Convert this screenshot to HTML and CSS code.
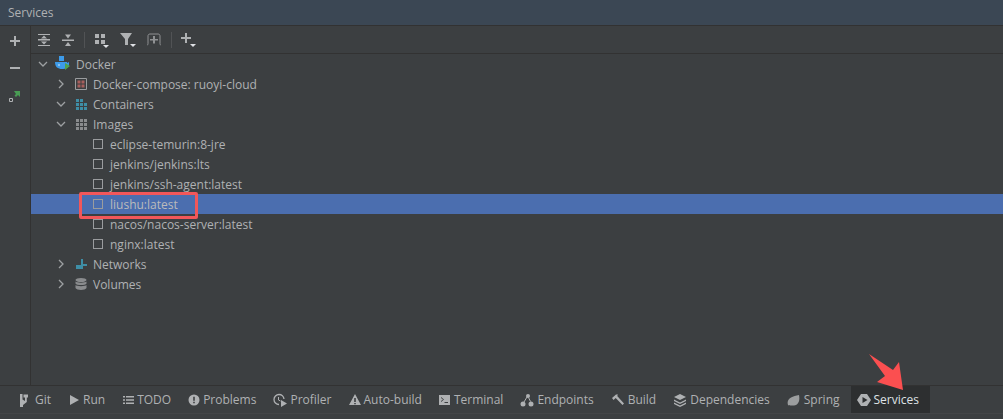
FILE: index.html
```html
<!DOCTYPE html>
<html lang="en">
  <head>
    <meta charset="UTF-8" />
    <title>Services</title>
    <link rel="stylesheet" href="styles.css">
  </head>
  <body>
    <div class="title">Services</div>
    <div class="main">
      <div class="side">
        <svg width="12" height="12" viewBox="0 0 12 12"><path d="M5 1h2v4h4v2H7v4H5V7H1V5h4z" fill="#afb1b3"/></svg>
        <svg width="12" height="12" viewBox="0 0 12 12"><path d="M1 5h10v2H1z" fill="#afb1b3"/></svg>
        <svg width="14" height="14" viewBox="0 0 14 14"><path d="M1.5 9.500h3v3h-3z" fill="none" stroke="#afb1b3"/><path d="M6 2h6v6L10 6 8 8 6.500 6.500 8 5z" fill="#499c54"/></svg>
      </div>
      <div class="content">
        <div class="toolbar">
          <svg class="tool" width="16" height="16" viewBox="0 0 16 16"><path d="M2 2h12v1H2zM2 13h12v1H2zM2 7h12v1.500H2zM8 3.500l3 3H5zM8 12.500l-3-3h6z" fill="#afb1b3"/></svg>
          <svg class="tool" width="16" height="16" viewBox="0 0 16 16"><path d="M2 7.500h12V9H2zM8 6.500l-3-4h6zM8 10l3 4H5z" fill="#afb1b3"/></svg>
          <span class="sep"></span>
          <svg class="tool" width="18" height="18" viewBox="0 0 18 18"><path d="M2 3h4v4H2zM8 3h4v4H8zM2 9h4v4H2zM8 9h4v4H8z" fill="#afb1b3"/><path d="M10 14h6l-3 3z" fill="#dfe1e5"/></svg>
          <svg class="tool" width="18" height="18" viewBox="0 0 18 18"><path d="M1 2h12L9 8v6H6V8z" fill="#afb1b3"/><path d="M11 13h6l-3 3z" fill="#dfe1e5"/></svg>
          <svg class="tool" width="18" height="18" viewBox="0 0 18 18"><path d="M2 14c1 0 1-1 1-2V5c0-1 .5-2 2-2h8c1.500 0 2 1 2 2v7c0 1 0 2 1 2" fill="none" stroke="#8f9193"/><path d="M8 5h2v3h3v1.500h-3v3H8v-3H5V8h3z" fill="#8f9193"/></svg>
          <span class="sep"></span>
          <svg class="tool" width="18" height="18" viewBox="0 0 18 18"><path d="M5 2h2v4h4v2H7v4H5V8H1V6h4z" fill="#afb1b3"/><path d="M10 13h6l-3 3z" fill="#dfe1e5"/></svg>
        </div>
        <div class="tree">
          <div class="row depth0">
            <svg class="arrow" width="12" height="12" viewBox="0 0 12 12"><path d="M2 4l4 4 4-4" fill="none" stroke="#9da0a2" stroke-width="1.300"/></svg>
            <svg class="icon" width="16" height="16" viewBox="0 0 16 16"><path d="M4 0h5v5H4z" fill="#3d9be9"/><path d="M0 6h12v1l2-1v2c0 3-3 5-7 5-4 0-7-2-7-7z" fill="#3d9be9"/><path d="M10 7l5 3-5 4z" fill="#4fa34f"/><path d="M3 8.500h2v1H3z" fill="#cfe6f8"/></svg>
            <span>Docker</span>
          </div>
          <div class="row depth1">
            <svg class="arrow" width="12" height="12" viewBox="0 0 12 12"><path d="M4 2l4 4-4 4" fill="none" stroke="#9da0a2" stroke-width="1.300"/></svg>
            <svg class="icon" width="14" height="14" viewBox="0 0 14 14"><path d="M1.500 1.500h11v11h-11z" fill="none" stroke="#9b9d9f"/><path d="M3.500 3.500h3v3h-3zM7.500 3.500h3v3h-3zM3.500 7.500h3v3h-3zM7.500 7.500h3v3h-3z" fill="#a85f5c"/></svg>
            <span>Docker-compose: ruoyi-cloud</span>
          </div>
          <div class="row depth1">
            <svg class="arrow" width="12" height="12" viewBox="0 0 12 12"><path d="M2 4l4 4 4-4" fill="none" stroke="#9da0a2" stroke-width="1.300"/></svg>
            <svg class="icon" width="14" height="14" viewBox="0 0 14 14"><path d="M2 2h3v3H2zM6 2h3v3H6zM2 6h3v3H2zM6 6h3v3H6zM10 6h3v3h-3zM2 10h3v3H2zM6 10h3v3H6zM10 10h3v3h-3z" fill="#3e8ea6"/></svg>
            <span>Containers</span>
          </div>
          <div class="row depth1">
            <svg class="arrow" width="12" height="12" viewBox="0 0 12 12"><path d="M2 4l4 4 4-4" fill="none" stroke="#9da0a2" stroke-width="1.300"/></svg>
            <svg class="icon" width="14" height="14" viewBox="0 0 14 14"><path d="M2 2h3v3H2zM6 2h3v3H6zM10 2h3v3h-3zM2 6h3v3H2zM6 6h3v3H6zM10 6h3v3h-3zM2 10h3v3H2zM6 10h3v3H6zM10 10h3v3h-3z" fill="#8a8c8e"/></svg>
            <span>Images</span>
          </div>
          <div class="row depth2"><i class="box"></i><span>eclipse-temurin:8-jre</span></div>
          <div class="row depth2"><i class="box"></i><span>jenkins/jenkins:lts</span></div>
          <div class="row depth2"><i class="box"></i><span>jenkins/ssh-agent:latest</span></div>
          <div class="row depth2 selected"><i class="box"></i><span>liushu:latest</span></div>
          <div class="row depth2"><i class="box"></i><span>nacos/nacos-server:latest</span></div>
          <div class="row depth2"><i class="box"></i><span>nginx:latest</span></div>
          <div class="row depth1">
            <svg class="arrow" width="12" height="12" viewBox="0 0 12 12"><path d="M4 2l4 4-4 4" fill="none" stroke="#9da0a2" stroke-width="1.300"/></svg>
            <svg class="icon" width="14" height="14" viewBox="0 0 14 14"><path d="M7 2h2v5h4v2H9v3H2V8h5z" fill="#3e8ea6"/></svg>
            <span>Networks</span>
          </div>
          <div class="row depth1">
            <svg class="arrow" width="12" height="12" viewBox="0 0 12 12"><path d="M4 2l4 4-4 4" fill="none" stroke="#9da0a2" stroke-width="1.300"/></svg>
            <svg class="icon" width="14" height="14" viewBox="0 0 14 14"><ellipse cx="7" cy="3" rx="5.500" ry="2" fill="#8a8c8e"/><path d="M1.500 4.500c1 1.500 10 1.500 11 0v2c-1 2-10 2-11 0zM1.500 8c1 1.500 10 1.500 11 0v3c-1 2.500-10 2.500-11 0z" fill="#8a8c8e"/></svg>
            <span>Volumes</span>
          </div>
        </div>
      </div>
    </div>
    <div class="tabs">
      <div class="tab git"><svg width="14" height="14" viewBox="0 0 14 14"><path d="M2 1h2.500v5.500L7 8V4.500h-1.500V1.500h4.500v3H8.800V9L5 12v2H2z" fill="#afb1b3"/></svg><span>Git</span></div>
      <div class="tab run"><svg width="12" height="14" viewBox="0 0 12 14"><path d="M2 2l9 5-9 5z" fill="#afb1b3"/></svg><span>Run</span></div>
      <div class="tab todo"><svg width="12" height="14" viewBox="0 0 12 14"><path d="M1 3h2v1.500H1zM4 3h8v1.500H4zM1 6.200h2v1.500H1zM4 6.200h8v1.500H4zM1 9.500h2V11H1zM4 9.500h8V11H4z" fill="#afb1b3"/></svg><span>TODO</span></div>
      <div class="tab problems"><svg width="12" height="14" viewBox="0 0 12 14"><path fill-rule="evenodd" d="M6 1.500a5.500 5.500 0 1 1 0 11 5.500 5.500 0 0 1 0-11zM5.200 3.800v4h1.600v-4zM5.200 8.800v1.500h1.600V8.800z" fill="#afb1b3"/></svg><span>Problems</span></div>
      <div class="tab profiler"><svg width="14" height="14" viewBox="0 0 14 14"><path d="M6 1.500a5 5 0 1 0 0 10" fill="none" stroke="#afb1b3" stroke-width="1.300"/><path d="M6 1.500a5 5 0 0 1 5 4.500" fill="none" stroke="#afb1b3" stroke-width="1.300"/><path d="M5.500 4v3l2 1" fill="none" stroke="#afb1b3"/><path d="M8 7l6 3.500L8 14z" fill="#afb1b3"/></svg><span>Profiler</span></div>
      <div class="tab build"><svg width="12" height="14" viewBox="0 0 12 14"><path fill-rule="evenodd" d="M6 1l6 11H0zM5.200 5v4h1.600V5zM5.200 10v1.300h1.600V10z" fill="#afb1b3"/></svg><span>Auto-build</span></div>
      <div class="tab terminal"><svg width="12" height="14" viewBox="0 0 12 14"><path fill-rule="evenodd" d="M0 2h11v10H0zM2 4v1l2 1.500L2 8v1l3-2.500zM5.500 9v1H9V9z" fill="#afb1b3"/></svg><span>Terminal</span></div>
      <div class="tab endpoints"><svg width="14" height="14" viewBox="0 0 14 14"><circle cx="8" cy="3" r="2" fill="#afb1b3"/><circle cx="3" cy="11" r="2.500" fill="#afb1b3"/><circle cx="11" cy="11" r="2.500" fill="#afb1b3"/><path d="M7 4L4 9M8.500 4.500l2 4" stroke="#afb1b3"/></svg><span>Endpoints</span></div>
      <div class="tab hammer"><svg width="14" height="14" viewBox="0 0 14 14"><path d="M1 5l4-3.500h2L6.200 3 13 10.500 11.500 12 4.700 5 2.500 7z" fill="#afb1b3"/></svg><span>Build</span></div>
      <div class="tab deps"><svg width="14" height="14" viewBox="0 0 14 14"><path d="M7 1l6 3-6 3-6-3z" fill="#afb1b3"/><path d="M1 6.500l6 3 6-3v1.500l-6 3-6-3zM1 9.500l6 3 6-3V11l-6 3-6-3z" fill="#afb1b3"/></svg><span>Dependencies</span></div>
      <div class="tab spring"><svg width="14" height="14" viewBox="0 0 14 14"><path d="M1 12C-1 6 5 3 12 2c1 5 0 10-5 10.500-2 .2-4 0-5-.5l-1 .5z" fill="#9c9e9f"/></svg><span>Spring</span></div>
      <div class="tab services active"><svg width="14" height="14" viewBox="0 0 14 14"><path fill-rule="evenodd" d="M4 1h6l4 6-4 6H4L0 7zM5.500 4v6l5-3z" fill="#afb1b3"/></svg><span>Services</span></div>
    </div>
    <div class="redbox"></div>
    <svg class="redarrow" width="38" height="38" viewBox="0 0 38 38"><path d="M0 0L24 16 30 8 34 36 8 28 16 22z" fill="#fb4f50"/></svg>
  </body>
</html>
```

FILE: styles.css
```css
html,
body {
  margin: 0;
  padding: 0;
}

body {
  position: relative;
  width: 1003px;
  height: 419px;
  overflow: hidden;
  background-color: #3c3f41;
  font-family: "Open Sans", sans-serif;
  font-size: 12px;
  color: #afb1b3;
}

svg {
  display: block;
  flex: none;
}

.title {
  height: 25px;
  line-height: 25px;
  padding-left: 8px;
  background-color: #3b4754;
  border-bottom: 1px solid #323232;
  font-size: 12px;
}

.main {
  display: flex;
  height: 359px;
  border-bottom: 1px solid #323232;
}

.side {
  width: 30px;
  border-right: 1px solid #323232;
  display: flex;
  flex-direction: column;
  align-items: center;
  padding-top: 9px;
  gap: 15px;
  box-sizing: content-box;
}

.content {
  flex: 1;
}

.toolbar {
  height: 27px;
  border-bottom: 1px solid #323232;
  display: flex;
  align-items: center;
  padding-left: 5px;
  gap: 8px;
}

.sep {
  width: 1px;
  height: 16px;
  background-color: #515355;
}

.tree {
  display: flex;
  flex-direction: column;
}

.row {
  height: 20px;
  display: flex;
  align-items: center;
  white-space: nowrap;
}

.depth0 {
  padding-left: 6px;
}

.depth1 {
  padding-left: 24px;
}

.depth2 {
  padding-left: 62px;
}

.arrow {
  margin-right: 7px;
}

.depth0 .arrow {
  margin-right: 6px;
}

.icon {
  margin-right: 5px;
}

.box {
  width: 8px;
  height: 8px;
  margin-right: 7px;
  border: 1.500px solid #9a9c9e;
}

.selected {
  background-color: #4b6eaf;
  color: #bbbbbb;
}

.tabs {
  display: flex;
  height: 27px;
  padding-left: 12px;
  border-bottom: 1px solid #434547;
}

.tab {
  display: flex;
  align-items: center;
  gap: 3px;
  padding: 0 11px 0 6px;
}

.tab.active {
  background-color: #2d2f30;
  color: #dfe1e5;
}

.redbox {
  position: absolute;
  left: 79px;
  top: 192px;
  width: 113px;
  height: 21px;
  border: 3px solid #f2575a;
  border-radius: 2px;
}

.redarrow {
  position: absolute;
  left: 869px;
  top: 354px;
}
```
